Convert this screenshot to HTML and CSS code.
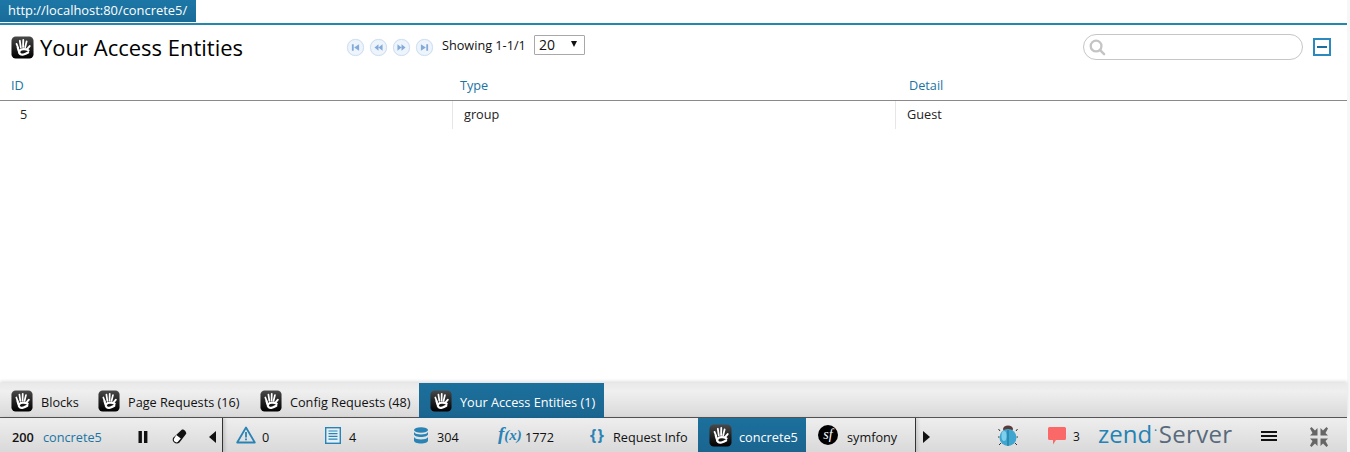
FILE: index.html
```html
<!DOCTYPE html>
<html lang="en">
<head>
<meta charset="utf-8">
<title>Your Access Entities</title>
<link rel="stylesheet" href="styles.css">
</head>
<body>
<svg class="defs" width="0" height="0" aria-hidden="true">
  <defs>
    <linearGradient id="tile" x1="0" y1="0" x2="0" y2="1"><stop offset="0" stop-color="#4a4a4a"/><stop offset=".5" stop-color="#222"/><stop offset="1" stop-color="#000"/></linearGradient>
    <symbol id="hand" viewBox="0 0 24 24">
      <rect x="0.5" y="0.5" width="23" height="23" rx="4.500" fill="url(#tile)"/>
      <g fill="none" stroke="#fff" stroke-linecap="round">
        <path d="M5.800 8.200 7.600 12.800M9.200 5 10.200 11.800M12.800 4.200 12.600 11.500M16.300 5.600 14.800 11.800" stroke-width="1.900"/>
        <path d="M19.500 10.500 16.800 13.800" stroke-width="2"/>
        <path d="M18.200 15C15.500 13.300 10.600 13.200 8.800 15.600 7.600 18 10.200 20 13 19.300 14.800 18.800 16.400 18 17.800 17.200" stroke-width="2.400"/>
        <path d="M7 12 8 15.500" stroke-width="2.200"/>
      </g>
    </symbol>
  </defs>
</svg>
<div class="app">
  <div class="url-row"><span class="url-tab">http://localhost:80/concrete5/</span></div>
  <main class="panel">
    <header class="head">
      <div class="title-box">
        <svg class="hand-icon"><use href="#hand"/></svg>
        <h1 class="title">Your Access Entities</h1>
      </div>
      <div class="pager">
        <span class="page-btn"><svg viewBox="0 0 10 10"><path d="M1 1.500h2v7H1zM9 1.500v7L3.500 5z"/></svg></span>
        <span class="page-btn"><svg viewBox="0 0 10 10"><path d="M5 1.500v7L0.500 5zM9.500 1.500v7L5 5z"/></svg></span>
        <span class="page-btn"><svg viewBox="0 0 10 10"><path d="M0.500 1.500v7L5 5zM5 1.500v7L9.500 5z"/></svg></span>
        <span class="page-btn"><svg viewBox="0 0 10 10"><path d="M1 1.500v7L6.500 5zM7 1.500h2v7H7z"/></svg></span>
      </div>
      <span class="showing">Showing 1-1/1</span>
      <div class="select"><span>20</span><i class="select-arrow"></i></div>
      <div class="search">
        <svg class="search-icon" viewBox="0 0 18 18"><circle cx="7.500" cy="7.500" r="5.700" fill="none" stroke="#c4c4c4" stroke-width="2.400"/><path d="M12 12l4 4" stroke="#c4c4c4" stroke-width="2.600" stroke-linecap="round"/></svg>
      </div>
      <div class="collapse"><i></i></div>
    </header>
    <div class="grid-head">
      <span class="gh gh-id">ID</span>
      <span class="gh">Type</span>
      <span class="gh">Detail</span>
    </div>
    <div class="grid-row">
      <span class="cell cell-id">5</span>
      <span class="cell cell-type">group</span>
      <span class="cell cell-detail">Guest</span>
    </div>
  </main>
  <nav class="tabs">
    <div class="tab tab-blocks"><svg class="hand-icon"><use href="#hand"/></svg><span>Blocks</span></div>
    <div class="tab tab-page"><svg class="hand-icon"><use href="#hand"/></svg><span>Page Requests (16)</span></div>
    <div class="tab tab-config"><svg class="hand-icon"><use href="#hand"/></svg><span>Config Requests (48)</span></div>
    <div class="tab tab-active"><svg class="hand-icon"><use href="#hand"/></svg><span>Your Access Entities (1)</span></div>
  </nav>
  <footer class="bar">
    <div class="seg seg-left">
      <span class="status">200</span>
      <span class="app-name">concrete5</span>
      <svg class="ic-pause" viewBox="0 0 10 12"><path d="M0.500 0h3.400v12H0.500zM6 0h3.400v12H6z"/></svg>
      <svg class="ic-eraser" viewBox="0 0 15 15"><path d="M10 0.500C12 0.300 14.500 2.500 14.200 4.800L7.500 13.500C6 15 3.500 14.800 2 13.300 0.500 11.800 0.300 10 1.200 8.700z" fill="#111"/><path d="M4.300 6 8.800 9.600 5.700 13C4.800 13.700 3.500 13.400 2.600 12.600 1.800 11.800 1.500 10.500 2.100 9.500z" fill="#fff"/></svg>
      <i class="tri tri-left"></i>
    </div>
    <div class="seg seg-mid">
      <div class="item it-warn">
        <svg class="ic-warn" viewBox="0 0 20 18"><path d="M10 1.500 18.800 16.500H1.200z" fill="none" stroke="#2a83b5" stroke-width="1.800" stroke-linejoin="round"/><path d="M9.100 6h1.800v5.500H9.100zM9.100 12.500h1.800v1.800H9.100z" fill="#2a83b5"/></svg>
        <span class="num">0</span>
      </div>
      <div class="item it-log">
        <svg class="ic-list" viewBox="0 0 16 17"><rect x="0.700" y="0.700" width="14.600" height="15.600" fill="#e4f0f7" stroke="#2a83b5" stroke-width="1.400"/><path d="M3.500 4h9M3.500 6.700h9M3.500 9.400h9M3.500 12.100h9" stroke="#2a83b5" stroke-width="1.200"/></svg>
        <span class="num">4</span>
      </div>
      <div class="item it-db">
        <svg class="ic-db" viewBox="0 0 14 17"><g fill="#2a83b5"><ellipse cx="7" cy="3" rx="7" ry="2.800"/><path d="M0 5v2.200C0 8.700 3 10 7 10s7-1.300 7-2.800V5C13 6.800 10 7.500 7 7.500S1 6.800 0 5z"/><path d="M0 10v3.500C0 15.200 3 16.500 7 16.500s7-1.300 7-3V10c-1 1.800-4 2.500-7 2.500S1 11.800 0 10z"/></g></svg>
        <span class="num">304</span>
      </div>
      <div class="item it-fx">
        <span class="fx"><b>f</b>(x)</span>
        <span class="num">1772</span>
      </div>
      <div class="item it-info">
        <span class="braces">{ }</span>
        <span class="num">Request Info</span>
      </div>
      <div class="item it-c5">
        <svg class="hand-icon"><use href="#hand"/></svg>
        <span class="num">concrete5</span>
      </div>
      <div class="item it-sf">
        <span class="sf-logo">sf</span>
        <span class="num">symfony</span>
      </div>
    </div>
    <div class="seg seg-right">
      <i class="tri tri-right"></i>
      <svg class="ic-bug" viewBox="0 0 20 22">
        <ellipse cx="10" cy="4" rx="5" ry="3.500" fill="#5c3a3a"/>
        <path d="M2 6 0.500 4M18 6l1.500-2M1.500 12H0M18.500 12H20M3 18l-2 2M17 18l2 2" stroke="#333" stroke-width="1"/>
        <ellipse cx="10" cy="12.500" rx="8.500" ry="8.500" fill="#3fa6cf"/>
        <ellipse cx="6" cy="11" rx="2.500" ry="5" fill="#7fd0ec"/>
        <path d="M10 5v16" stroke="#1c6f93" stroke-width="1"/>
      </svg>
      <svg class="ic-comment" viewBox="0 0 18 18"><path d="M1.500 0H16.500A1.500 1.500 0 0 1 18 1.500V11.500A1.500 1.500 0 0 1 16.500 13H8L5 17.500V13H1.500A1.500 1.500 0 0 1 0 11.500V1.500A1.500 1.500 0 0 1 1.500 0z" fill="#fb6868"/></svg>
      <span class="count">3</span>
      <div class="zend"><span class="zend-a">zend</span><span class="zend-dot">•</span><span class="zend-b">Server</span></div>
      <div class="burger"><i></i><i></i><i></i></div>
      <svg class="ic-shrink" viewBox="0 0 20 20"><g fill="#666"><path d="M1 1.500 2.500 0 6 3.500 8.500 1V8.500H1L3.500 6z"/><path d="M19 1.500 17.500 0 14 3.500 11.500 1V8.500H19L16.500 6z"/><path d="M1 18.500 2.500 20 6 16.500 8.500 19V11.500H1L3.500 14z"/><path d="M19 18.500 17.500 20 14 16.500 11.500 19V11.500H19L16.500 14z"/></g></svg>
    </div>
  </footer>
</div>
</body>
</html>
```

FILE: styles.css
```css
* { box-sizing: border-box; }
html, body { margin: 0; padding: 0; height: 100%; }
body {
  background: #f7f7f7;
  font-family: "Open Sans", sans-serif;
  font-size: 12.700px;
  color: #111;
  overflow: hidden;
}
.defs { display: block; height: 0; }
.app {
  width: 1347px;
  height: 452px;
  display: flex;
  flex-direction: column;
  background: #fff;
}
.url-row { height: 23px; flex: none; }
.url-tab {
  display: block;
  width: 196px;
  height: 22px;
  padding-left: 8px;
  background: linear-gradient(#1c77a6, #1a6c98);
  color: #fff;
  font-size: 12.900px;
  line-height: 21px;
}
.panel {
  flex: 1;
  border-top: 2px solid #2487ae;
  min-height: 0;
}
.head {
  height: 51px;
  display: flex;
  align-items: flex-start;
}
.title-box {
  width: 347px;
  padding: 11px 0 0 11px;
  display: flex;
  align-items: center;
}
.hand-icon { width: 23px; height: 23px; flex: none; }
.title {
  margin: -2px 0 0 6px;
  font-size: 22px;
  font-weight: 400;
  line-height: 24px;
  color: #000;
}
.pager {
  width: 95px;
  padding-top: 14px;
  display: flex;
  gap: 6.500px;
}
.page-btn {
  width: 16.500px;
  height: 16.500px;
  border-radius: 50%;
  background: #eef4fb;
  border: 1px solid #cfdff0;
  box-shadow: 0 0 1px #dfe9f5;
  display: flex;
  align-items: center;
  justify-content: center;
}
.page-btn svg { width: 9px; height: 9px; fill: #83aad8; }
.showing {
  width: 92px;
  padding-top: 12px;
  line-height: 16px;
  color: #111;
}
.select {
  margin-top: 10px;
  width: 51px;
  height: 20px;
  border: 1px solid #a8a8a8;
  border-radius: 1px;
  padding-left: 4px;
  display: flex;
  align-items: center;
  font-size: 14px;
  line-height: 18px;
  position: relative;
}
.select-arrow {
  position: absolute;
  right: 7px;
  top: 5px;
  border-left: 3.500px solid transparent;
  border-right: 3.500px solid transparent;
  border-top: 6px solid #111;
}
.search {
  margin: 9px 0 0 498px;
  width: 220px;
  height: 26px;
  border: 1px solid #c6c6c6;
  border-radius: 13px;
  background: #fff;
  padding: 4px 0 0 5px;
}
.search-icon { width: 17px; height: 17px; display: block; }
.collapse {
  margin: 13px 0 0 10px;
  width: 18px;
  height: 18px;
  border: 2px solid #2a8ac0;
  display: flex;
  align-items: center;
  justify-content: center;
}
.collapse i { width: 10px; height: 2px; background: #1a6f9e; display: block; }
.grid-head {
  height: 25px;
  display: grid;
  grid-template-columns: 449px 449px 1fr;
  border-bottom: 1px solid #8a8a8a;
  padding-left: 11px;
  color: #1a74a3;
  line-height: 19px;
}
.grid-row {
  height: 28px;
  display: grid;
  grid-template-columns: 452px 443px 1fr;
  line-height: 27px;
  color: #222;
}
.cell-id { padding-left: 20px; }
.cell-type, .cell-detail { border-left: 1px solid #e6e6e6; }
.cell-type { padding-left: 11px; }
.cell-detail { padding-left: 11px; }
.tabs {
  height: 35px;
  flex: none;
  display: flex;
  background: linear-gradient(#e9e9e9, #efefef 25%, #d9d9d9);
  border-bottom: 1px solid #555;
  box-shadow: 0 -2px 3px rgba(0,0,0,.12);
  position: relative;
}
.tab {
  height: 35px;
  display: flex;
  align-items: center;
  color: #111;
}
.tab .hand-icon { width: 22px; height: 22px; }
.tab span { margin-left: 8px; padding-top: 3px; }
.tab-blocks { width: 88px; padding-left: 11px; }
.tab-page { width: 162px; padding-left: 10px; }
.tab-config { width: 169px; padding-left: 10px; }
.tab-active {
  width: 185px;
  padding-left: 11px;
  background: linear-gradient(#1c709c, #1a6590);
  color: #fff;
}
.bar {
  height: 34px;
  flex: none;
  display: flex;
  background: linear-gradient(#eeeeee, #d9d9d9);
  color: #111;
}
.seg { height: 100%; display: flex; align-items: center; }
.seg-left {
  width: 223px;
  border-right: 1px solid #333;
  padding-left: 12px;
  box-shadow: 2px 0 3px rgba(0,0,0,.15);
  position: relative;
}
.status { font-weight: 600; width: 31px; padding-top: 3px; }
.app-name { color: #1a74a3; width: 92px; padding-top: 3px; }
.ic-pause { width: 10px; height: 12px; fill: #111; margin: 4px 0 0 3px; }
.ic-eraser { width: 15px; height: 15px; margin: 2px 0 0 24px; }
.tri { display: block; width: 0; height: 0; border-top: 6px solid transparent; border-bottom: 6px solid transparent; margin-top: 4px; }
.tri-left { border-right: 7px solid #111; margin-left: 22px; }
.tri-right { border-left: 7px solid #111; }
.seg-mid {
  width: 693px;
  border-right: 1px solid #333;
  box-shadow: 2px 0 3px rgba(0,0,0,.12);
  position: relative;
}
.item { height: 100%; display: flex; align-items: center; }
.num { padding-top: 3px; white-space: nowrap; }
.it-warn { width: 102px; padding-left: 13px; gap: 6px; }
.ic-warn { width: 20px; height: 18px; }
.it-log { width: 89px; gap: 8px; }
.ic-list { width: 16px; height: 17px; }
.it-db { width: 84px; gap: 9px; }
.ic-db { width: 14px; height: 17px; }
.it-fx { width: 92px; gap: 3px; }
.fx {
  font-family: "Liberation Serif", serif;
  font-style: italic;
  font-weight: 700;
  font-size: 15px;
  color: #2a83b5;
  width: 24px;
  white-space: nowrap;
  margin-top: -2px;
}
.fx b { font-size: 19px; }
.it-info { width: 108px; gap: 8px; }
.braces { color: #2a83b5; font-weight: 700; font-size: 16px; width: 15px; white-space: nowrap; letter-spacing: -1.500px; }
.it-c5 {
  width: 108px;
  padding-left: 11px;
  gap: 7px;
  background: linear-gradient(#1c709c, #1a6590);
  color: #fff;
}
.it-sf { width: 109px; padding-left: 12px; gap: 9px; }
.sf-logo {
  width: 20px;
  height: 20px;
  border-radius: 50%;
  background: #000;
  color: #fff;
  font-family: "Liberation Serif", serif;
  font-style: italic;
  font-size: 14px;
  line-height: 19px;
  text-align: center;
  flex: none;
}
.seg-right { flex: 1; padding-left: 7px; }
.ic-bug { width: 20px; height: 22px; margin: 2px 0 0 68px; }
.ic-comment { width: 18px; height: 18px; margin: 2px 0 0 30px; }
.count { margin-left: 7px; width: 25px; padding-top: 3px; font-size: 12px; }
.zend { width: 163px; display: flex; align-items: baseline; font-size: 24px; line-height: 24px; margin-top: 5px; white-space: nowrap; }
.zend-a { color: #2583b4; }
.zend-dot { color: #2583b4; font-size: 7px; margin: 0 2px; position: relative; top: -10px; }
.zend-b { color: #586a7c; letter-spacing: .3px; }
.burger { width: 16px; display: flex; flex-direction: column; gap: 2px; margin: 2px 32px 0 0; }
.burger i { display: block; height: 2px; background: #111; }
.ic-shrink { width: 20px; height: 20px; margin-top: 3px; }
```
